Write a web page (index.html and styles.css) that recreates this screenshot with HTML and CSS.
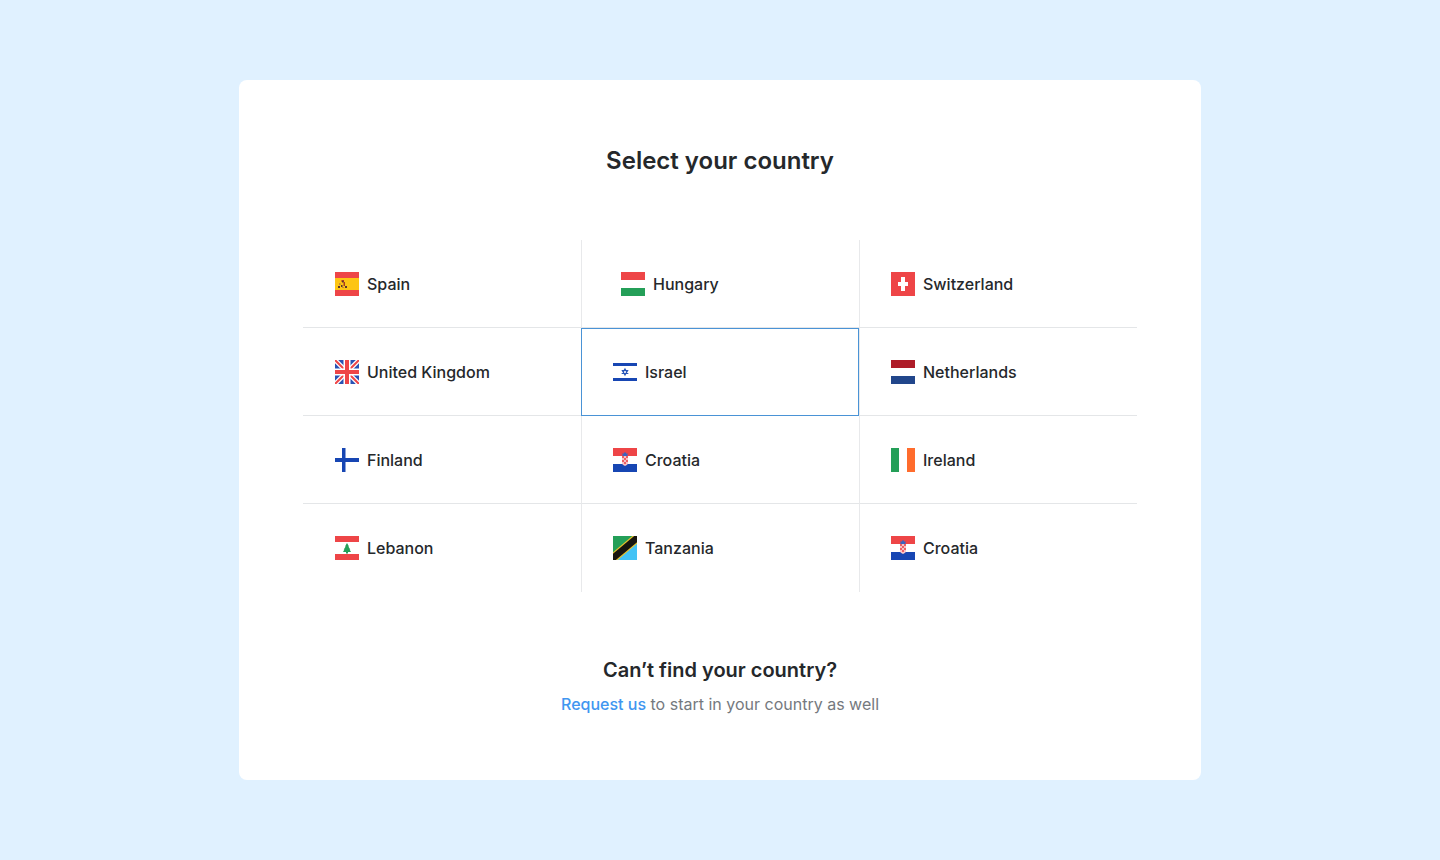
FILE: index.html
```html
<!DOCTYPE html>
<html lang="en">
<head>
<meta charset="utf-8">
<meta name="viewport" content="width=device-width, initial-scale=1">
<title>Select your country</title>
<link rel="stylesheet" href="styles.css">
</head>
<body>
<svg class="sprite" aria-hidden="true">
  <symbol id="croatia" viewBox="0 0 24 24">
    <path fill="#fff" d="M0 0h24v24H0z"/>
    <path fill="#ee4547" d="M0 0h24v8H0z"/>
    <path fill="#1746b3" d="M0 16h24v8H0z"/>
    <path fill="#f8c4c6" d="M9 8h6v7q0 2-3 3-3-1-3-3z"/>
    <path fill="#ee6064" d="M9 8h2v2H9zM13 8h2v2h-2zM11 10h2v2h-2zM9 12h2v2H9zM13 12h2v2h-2zM11 14h2v2h-2z"/>
    <path fill="#3c64c0" d="M9.500 5l1 1 .5-1.500h2l.5 1.500 1-1v3h-5z"/>
  </symbol>
</svg>
<main class="card">
  <form class="picker">
    <h1 class="title" id="title">Select your country</h1>
    <div class="countries" role="radiogroup" aria-labelledby="title">
      <label class="country"><input class="choice" type="radio" name="country" value="es">
        <svg class="flag" viewBox="0 0 24 24"><path fill="#ee4547" d="M0 0h24v24H0z"/><path fill="#fdc513" d="M0 6h24v12H0z"/><path fill="#a83a22" d="M6.500 8h2.500v2H6.500zM8.500 10H10v4H8.500z"/><path fill="#5a3430" d="M7 9h1.500v1.500H7zM3 14h2v2H3zM6 13h1.500v2H6zM10 14h2v2h-2z"/><path fill="#c8873a" d="M4 11h1.500v2H4zM7 15h2v1H7z"/></svg>
        <span>Spain</span></label>
      <label class="country country-indented"><input class="choice" type="radio" name="country" value="hu">
        <svg class="flag" viewBox="0 0 24 24"><path fill="#ee4547" d="M0 0h24v8H0z"/><path fill="#249f58" d="M0 16h24v8H0z"/></svg>
        <span>Hungary</span></label>
      <label class="country"><input class="choice" type="radio" name="country" value="ch">
        <svg class="flag" viewBox="0 0 24 24"><path fill="#ee4547" d="M0 0h24v24H0z"/><path fill="#fff" d="M10 5h4v5h3v4h-3v5h-4v-5H7v-4h3z"/></svg>
        <span>Switzerland</span></label>
      <label class="country"><input class="choice" type="radio" name="country" value="gb">
        <svg class="flag" viewBox="0 0 24 24"><path fill="#2952b4" d="M0 0h24v24H0z"/><path stroke="#fff" stroke-width="4.500" d="M0 0l24 24M24 0L0 24"/><path stroke="#ee4547" stroke-width="2" d="M0 0l24 24M24 0L0 24"/><path fill="#fff" d="M8.500 0h7v8.500H24v7h-8.500V24h-7v-8.500H0v-7h8.500z"/><path fill="#ee4547" d="M10 0h4v10h10v4H14v10h-4V14H0v-4h10z"/></svg>
        <span>United Kingdom</span></label>
      <label class="country"><input class="choice" type="radio" name="country" value="il" checked>
        <svg class="flag" viewBox="0 0 24 24"><path fill="#1746b3" d="M0 3h24v3H0zM0 18h24v3H0z"/><path fill="none" stroke="#2856b9" stroke-width="1.200" d="M12 9l2.600 4.500H9.400zM12 15l2.600-4.500H9.400z"/></svg>
        <span>Israel</span></label>
      <label class="country"><input class="choice" type="radio" name="country" value="nl">
        <svg class="flag" viewBox="0 0 24 24"><path fill="#ae1c28" d="M0 0h24v8H0z"/><path fill="#21468b" d="M0 16h24v8H0z"/></svg>
        <span>Netherlands</span></label>
      <label class="country"><input class="choice" type="radio" name="country" value="fi">
        <svg class="flag" viewBox="0 0 24 24"><path fill="#1746b3" d="M7 0h3.500v10H24v4H10.500v10H7V14H0v-4h7z"/></svg>
        <span>Finland</span></label>
      <label class="country"><input class="choice" type="radio" name="country" value="hr">
        <svg class="flag"><use href="#croatia"/></svg>
        <span>Croatia</span></label>
      <label class="country"><input class="choice" type="radio" name="country" value="ie">
        <svg class="flag" viewBox="0 0 24 24"><path fill="#249f58" d="M0 0h8v24H0z"/><path fill="#ff6c2d" d="M16 0h8v24h-8z"/></svg>
        <span>Ireland</span></label>
      <label class="country"><input class="choice" type="radio" name="country" value="lb">
        <svg class="flag" viewBox="0 0 24 24"><path fill="#ee4547" d="M0 0h24v6H0zM0 18h24v6H0z"/><path fill="#249f58" d="M12 7l2 3.500h-.7l2 3h-.7l1.400 2.500h-3v1.500h-2V16H8l1.400-2.500h-.7l2-3H10z"/></svg>
        <span>Lebanon</span></label>
      <label class="country"><input class="choice" type="radio" name="country" value="tz">
        <svg class="flag" viewBox="0 0 24 24"><path fill="#249f58" d="M0 0h24L0 24z"/><path fill="#43c3f5" d="M24 0v24H0z"/><path stroke="#e5c02c" stroke-width="9" d="M-4 25.500l32-27"/><path stroke="#17150f" stroke-width="6.500" d="M-4 25.500l32-27"/></svg>
        <span>Tanzania</span></label>
      <label class="country"><input class="choice" type="radio" name="country" value="hr-2">
        <svg class="flag"><use href="#croatia"/></svg>
        <span>Croatia</span></label>
    </div>
  </form>
  <section class="help">
    <h2 class="help-title">Can’t find your country?</h2>
    <p class="help-text"><a class="link" href="#request">Request us</a> to start in your country as well</p>
  </section>
</main>
</body>
</html>
```
FILE: styles.css
```css
*, *::before, *::after { box-sizing: border-box; }

body {
  margin: 0;
  min-height: 100vh;
  padding: 32px;
  display: flex;
  align-items: center;
  justify-content: center;
  background: #e0f1ff;
  color: #25282b;
  font: 500 16px/24px Inter, "Liberation Sans", sans-serif;
}

.sprite { position: absolute; width: 0; height: 0; }

.card {
  width: 100%;
  max-width: 962px;
  padding: 64px;
  border-radius: 8px;
  background: #fff;
}

.title {
  margin: 0 0 62px;
  font-size: 24px;
  font-weight: 600;
  line-height: 34px;
  text-align: center;
}

.countries {
  display: grid;
  grid-template-columns: repeat(3, 1fr);
}

.country {
  position: relative;
  display: flex;
  align-items: center;
  gap: 8px;
  padding: 32px 32px 31px;
  border-bottom: 1px solid #e4e6e8;
  cursor: pointer;
}

.country:not(:nth-child(3n + 1)) {
  padding-left: 31px;
  border-left: 1px solid #e8e9eb;
}

.country:nth-last-child(-n + 3) {
  padding-bottom: 32px;
  border-bottom: 0;
}

.country.country-indented:nth-child(2) { padding-left: 39px; }

/* The radio covers its cell and draws the selection frame. */
.choice {
  position: absolute;
  inset: 0 0 -1px -1px;
  margin: 0;
  appearance: none;
  cursor: pointer;
}

.choice:checked { border: 1px solid #4a93d6; }

.choice:focus-visible { outline: 2px solid #2f80ed; }

.flag { flex: none; width: 24px; height: 24px; }

.help { margin-top: 64px; text-align: center; }

.help-title {
  margin: 0 0 8px;
  font-size: 20px;
  font-weight: 600;
  line-height: 28px;
}

.help-text {
  margin: 0;
  color: #75797e;
  font-weight: 400;
}

.link {
  color: #4096f0;
  font-weight: 500;
  text-decoration: none;
}

.link:hover { text-decoration: underline; }
```
